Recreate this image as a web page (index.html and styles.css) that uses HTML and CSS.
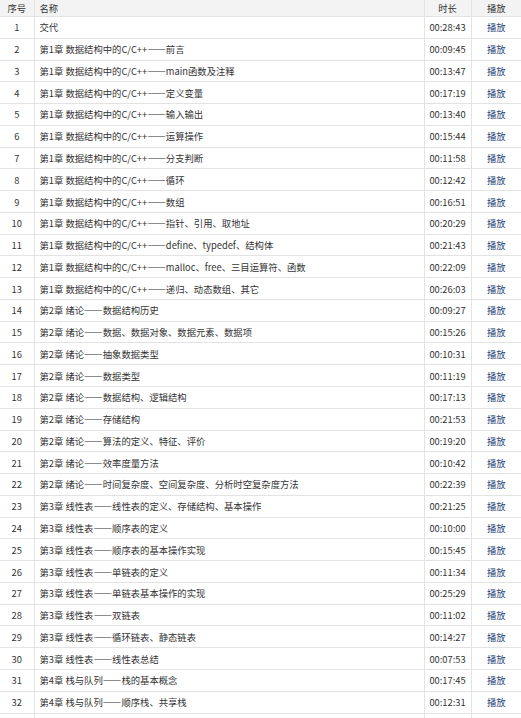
FILE: index.html
```html
<!DOCTYPE html>
<html lang="zh-CN">
<head>
<meta charset="utf-8">
<title>课程目录</title>
<link rel="stylesheet" href="styles.css">
</head>
<body>
<table class="course">
  <colgroup>
    <col class="c-no">
    <col class="c-name">
    <col class="c-time">
    <col class="c-play">
  </colgroup>
  <thead>
    <tr><th class="no">序号</th><th class="name">名称</th><th class="time">时长</th><th class="play">播放</th></tr>
  </thead>
  <tbody>
    <tr><td class="no">1</td><td class="name">交代</td><td class="time">00:28:43</td><td class="play"><a>播放</a></td></tr>
    <tr><td class="no">2</td><td class="name">第1章 数据结构中的C/C++——前言</td><td class="time">00:09:45</td><td class="play"><a>播放</a></td></tr>
    <tr><td class="no">3</td><td class="name">第1章 数据结构中的C/C++——main函数及注释</td><td class="time">00:13:47</td><td class="play"><a>播放</a></td></tr>
    <tr><td class="no">4</td><td class="name">第1章 数据结构中的C/C++——定义变量</td><td class="time">00:17:19</td><td class="play"><a>播放</a></td></tr>
    <tr><td class="no">5</td><td class="name">第1章 数据结构中的C/C++——输入输出</td><td class="time">00:13:40</td><td class="play"><a>播放</a></td></tr>
    <tr><td class="no">6</td><td class="name">第1章 数据结构中的C/C++——运算操作</td><td class="time">00:15:44</td><td class="play"><a>播放</a></td></tr>
    <tr><td class="no">7</td><td class="name">第1章 数据结构中的C/C++——分支判断</td><td class="time">00:11:58</td><td class="play"><a>播放</a></td></tr>
    <tr><td class="no">8</td><td class="name">第1章 数据结构中的C/C++——循环</td><td class="time">00:12:42</td><td class="play"><a>播放</a></td></tr>
    <tr><td class="no">9</td><td class="name">第1章 数据结构中的C/C++——数组</td><td class="time">00:16:51</td><td class="play"><a>播放</a></td></tr>
    <tr><td class="no">10</td><td class="name">第1章 数据结构中的C/C++——指针、引用、取地址</td><td class="time">00:20:29</td><td class="play"><a>播放</a></td></tr>
    <tr><td class="no">11</td><td class="name">第1章 数据结构中的C/C++——define、typedef、结构体</td><td class="time">00:21:43</td><td class="play"><a>播放</a></td></tr>
    <tr><td class="no">12</td><td class="name">第1章 数据结构中的C/C++——malloc、free、三目运算符、函数</td><td class="time">00:22:09</td><td class="play"><a>播放</a></td></tr>
    <tr><td class="no">13</td><td class="name">第1章 数据结构中的C/C++——递归、动态数组、其它</td><td class="time">00:26:03</td><td class="play"><a>播放</a></td></tr>
    <tr><td class="no">14</td><td class="name">第2章 绪论——数据结构历史</td><td class="time">00:09:27</td><td class="play"><a>播放</a></td></tr>
    <tr><td class="no">15</td><td class="name">第2章 绪论——数据、数据对象、数据元素、数据项</td><td class="time">00:15:26</td><td class="play"><a>播放</a></td></tr>
    <tr><td class="no">16</td><td class="name">第2章 绪论——抽象数据类型</td><td class="time">00:10:31</td><td class="play"><a>播放</a></td></tr>
    <tr><td class="no">17</td><td class="name">第2章 绪论——数据类型</td><td class="time">00:11:19</td><td class="play"><a>播放</a></td></tr>
    <tr><td class="no">18</td><td class="name">第2章 绪论——数据结构、逻辑结构</td><td class="time">00:17:13</td><td class="play"><a>播放</a></td></tr>
    <tr><td class="no">19</td><td class="name">第2章 绪论——存储结构</td><td class="time">00:21:53</td><td class="play"><a>播放</a></td></tr>
    <tr><td class="no">20</td><td class="name">第2章 绪论——算法的定义、特征、评价</td><td class="time">00:19:20</td><td class="play"><a>播放</a></td></tr>
    <tr><td class="no">21</td><td class="name">第2章 绪论——效率度量方法</td><td class="time">00:10:42</td><td class="play"><a>播放</a></td></tr>
    <tr><td class="no">22</td><td class="name">第2章 绪论——时间复杂度、空间复杂度、分析时空复杂度方法</td><td class="time">00:22:39</td><td class="play"><a>播放</a></td></tr>
    <tr><td class="no">23</td><td class="name">第3章 线性表——线性表的定义、存储结构、基本操作</td><td class="time">00:21:25</td><td class="play"><a>播放</a></td></tr>
    <tr><td class="no">24</td><td class="name">第3章 线性表——顺序表的定义</td><td class="time">00:10:00</td><td class="play"><a>播放</a></td></tr>
    <tr><td class="no">25</td><td class="name">第3章 线性表——顺序表的基本操作实现</td><td class="time">00:15:45</td><td class="play"><a>播放</a></td></tr>
    <tr><td class="no">26</td><td class="name">第3章 线性表——单链表的定义</td><td class="time">00:11:34</td><td class="play"><a>播放</a></td></tr>
    <tr><td class="no">27</td><td class="name">第3章 线性表——单链表基本操作的实现</td><td class="time">00:25:29</td><td class="play"><a>播放</a></td></tr>
    <tr><td class="no">28</td><td class="name">第3章 线性表——双链表</td><td class="time">00:11:02</td><td class="play"><a>播放</a></td></tr>
    <tr><td class="no">29</td><td class="name">第3章 线性表——循环链表、静态链表</td><td class="time">00:14:27</td><td class="play"><a>播放</a></td></tr>
    <tr><td class="no">30</td><td class="name">第3章 线性表——线性表总结</td><td class="time">00:07:53</td><td class="play"><a>播放</a></td></tr>
    <tr><td class="no">31</td><td class="name">第4章 栈与队列——栈的基本概念</td><td class="time">00:17:45</td><td class="play"><a>播放</a></td></tr>
    <tr><td class="no">32</td><td class="name">第4章 栈与队列——顺序栈、共享栈</td><td class="time">00:12:31</td><td class="play"><a>播放</a></td></tr>
    <tr class="tail"><td class="no"></td><td class="name"></td><td class="time"></td><td class="play"></td></tr>
  </tbody>
</table>
</body>
</html>
```

FILE: styles.css
```css
html, body {
  margin: 0;
  padding: 0;
  background: #ffffff;
}

body {
  font-family: "Noto Sans CJK SC", "Noto Sans", sans-serif;
  font-size: 9.33px;
  color: #333333;
}

.course {
  width: 521px;
  border-collapse: collapse;
  table-layout: fixed;
}

.c-no { width: 34px; }
.c-name { width: 390px; }
.c-time { width: 47px; }
.c-play { width: 50px; }

.course th,
.course td {
  padding: 0;
  border: 1px solid #e3e3e3;
  white-space: nowrap;
  overflow: hidden;
  line-height: 12px;
}

.course th:first-child,
.course td:first-child { border-left: none; }
.course th:last-child,
.course td:last-child { border-right: none; }
.course thead th { border-top: none; }

.course thead th {
  height: 16px;
  background: #f3f3f3;
  font-weight: normal;
  color: #333333;
}

.course tbody td {
  height: 20.77px;
}

.no { text-align: center; }
.name { text-align: left; padding-left: 5px !important; }
.time { text-align: center; }
.play { text-align: center; }

.play a {
  color: #1f3f7a;
  text-decoration: none;
  cursor: pointer;
}
```
